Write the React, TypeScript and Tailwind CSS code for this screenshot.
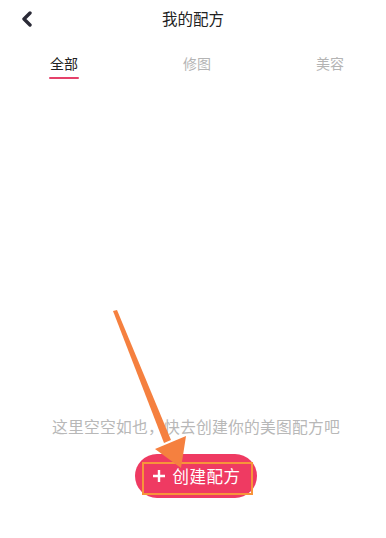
import React, { useState } from "react";

const tabs = ["全部", "修图", "美容"];

export default function App() {
    const [active, setActive] = useState(0);

    return (
        <div
            className="relative w-[386px] h-[538px] bg-white overflow-hidden flex flex-col"
            style={{ fontFamily: '"Noto Sans CJK SC", "Noto Sans", sans-serif' }}
        >
            {/* header */}
            <div className="relative h-[38px] flex items-center justify-center">
                <button className="absolute left-[18px] top-[10px] w-[18px] h-[18px] flex items-center justify-center">
                    <svg width="14" height="16" viewBox="0 0 14 16">
                        <path d="M10 2 L4 8 L10 14" stroke="#2a2a36" strokeWidth="3.4" fill="none" strokeLinecap="round" strokeLinejoin="round" />
                    </svg>
                </button>
                <span className="text-[15.5px] text-[#222] leading-none">我的配方</span>
            </div>

            {/* tabs */}
            <div className="flex gap-[91px] pl-[43px] mt-[18px] h-[32px]">
                {tabs.map((t, i) => (
                    <button key={t} onClick={() => setActive(i)} className="flex flex-col items-center w-[42px]">
                        <span className={`text-[14px] leading-none ${i === active ? "text-[#222]" : "text-[#b4b4b4]"}`}>{t}</span>
                        {i === active && <span className="mt-[7px] w-[30px] h-[2px] rounded-full bg-[#e5416a]" />}
                    </button>
                ))}
            </div>

            {/* empty state */}
            <div className="flex-1 flex flex-col items-center justify-end pb-[40px]">
                <p className="ml-[6px] text-[15.8px] text-[#b8b8b8] leading-none tracking-[0.2px]">这里空空如也，快去创建你的美图配方吧</p>
                <button className="ml-[6px] mt-[19px] w-[122px] h-[44px] rounded-full bg-[#ef3a62] text-white flex items-center justify-center gap-[7px]">
                    <svg width="14" height="14" viewBox="0 0 14 14">
                        <path d="M7 1 V13 M1 7 H13" stroke="white" strokeWidth="2.4" />
                    </svg>
                    <span className="text-[16.5px] leading-none tracking-[0.5px]">创建配方</span>
                </button>
            </div>

            {/* annotation box */}
            <div className="absolute left-[142px] top-[462px] w-[111px] h-[33px] border-2 border-[#f7943a] pointer-events-none" />

            {/* annotation arrow */}
            <svg className="absolute left-0 top-0 pointer-events-none" width="386" height="538" viewBox="0 0 386 538">
                <polygon points="113,311 117,310 171,440 164,443" fill="#f5803f" />
                <polygon points="155,449 186,436 181,468" fill="#f5803f" />
            </svg>
        </div>
    );
}
